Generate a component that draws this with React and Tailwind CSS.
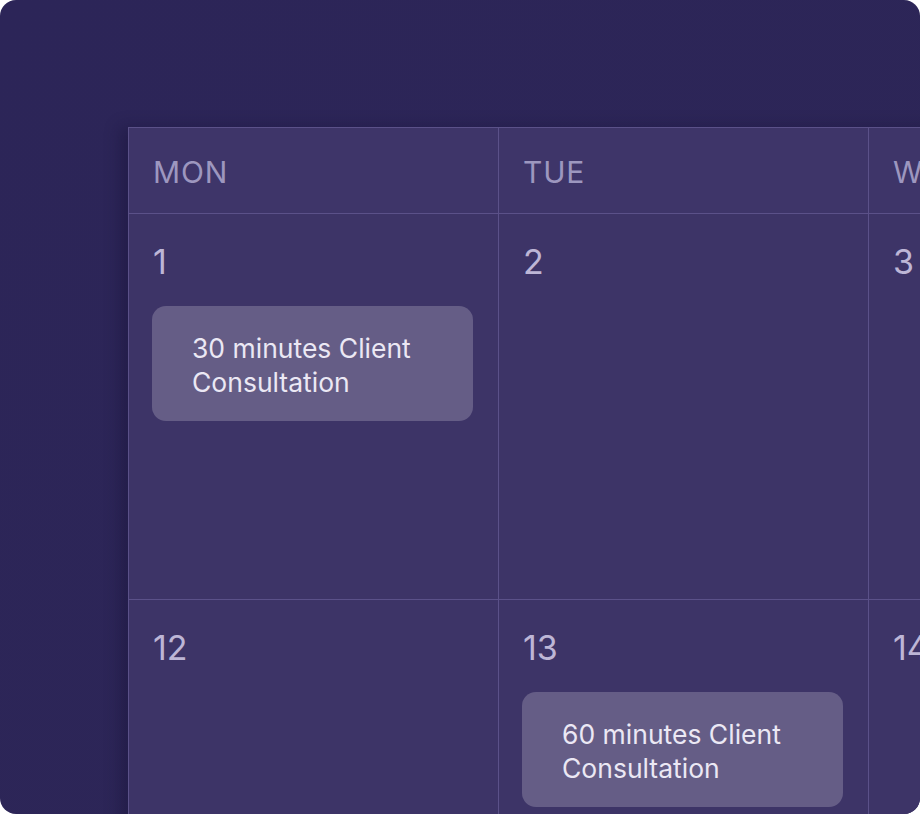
const days = ["MON", "TUE", "WED"];

const weeks = [
  [
    { n: "1", event: "30 minutes Client Consultation" },
    { n: "2" },
    { n: "3" },
  ],
  [
    { n: "12" },
    { n: "13", event: "60 minutes Client Consultation" },
    { n: "14" },
  ],
];

function Cell({ n, event, tall }) {
  return (
    <div
      className={`border-r border-b border-[#5b5189] px-6 pt-[26px] ${
        tall ? "h-[386px]" : "h-[300px]"
      }`}
    >
      <div className="text-[34px] leading-[44px] text-[#bdb6d6]">{n}</div>
      {event && (
        <div className="-ml-px mt-[22px] w-[321px] h-[115px] rounded-[14px] bg-[#655d86] pl-[40px] pr-5 pt-[25px]">
          <p className="text-[26.5px] leading-[34px] text-[#ebe8f4]">{event}</p>
        </div>
      )}
    </div>
  );
}

export default function App() {
  return (
    <div
      className="w-[920px] h-[814px] overflow-hidden rounded-2xl bg-gradient-to-br from-[#2c2558] to-[#2d2657] pl-[128px] pt-[127px]"
      style={{ fontFamily: "Inter, 'Noto Sans', sans-serif" }}
    >
      <div className="w-[1110px] border-l border-t border-[#5b5189] bg-[#3d3467] shadow-[-8px_0_14px_rgba(20,14,50,0.35)]">
        <div className="grid grid-cols-[370px_370px_370px]">
          {days.map((d) => (
            <div
              key={d}
              className="h-[86px] border-r border-b border-[#5b5189] bg-[#3e3569] px-6 pt-[26px] text-[30px] leading-[36px] tracking-[0.8px] text-[#9d97bf]"
            >
              {d}
            </div>
          ))}
          {weeks.map((w, i) =>
            w.map((c) => <Cell key={c.n} {...c} tall={i === 0} />)
          )}
        </div>
      </div>
    </div>
  );
}
